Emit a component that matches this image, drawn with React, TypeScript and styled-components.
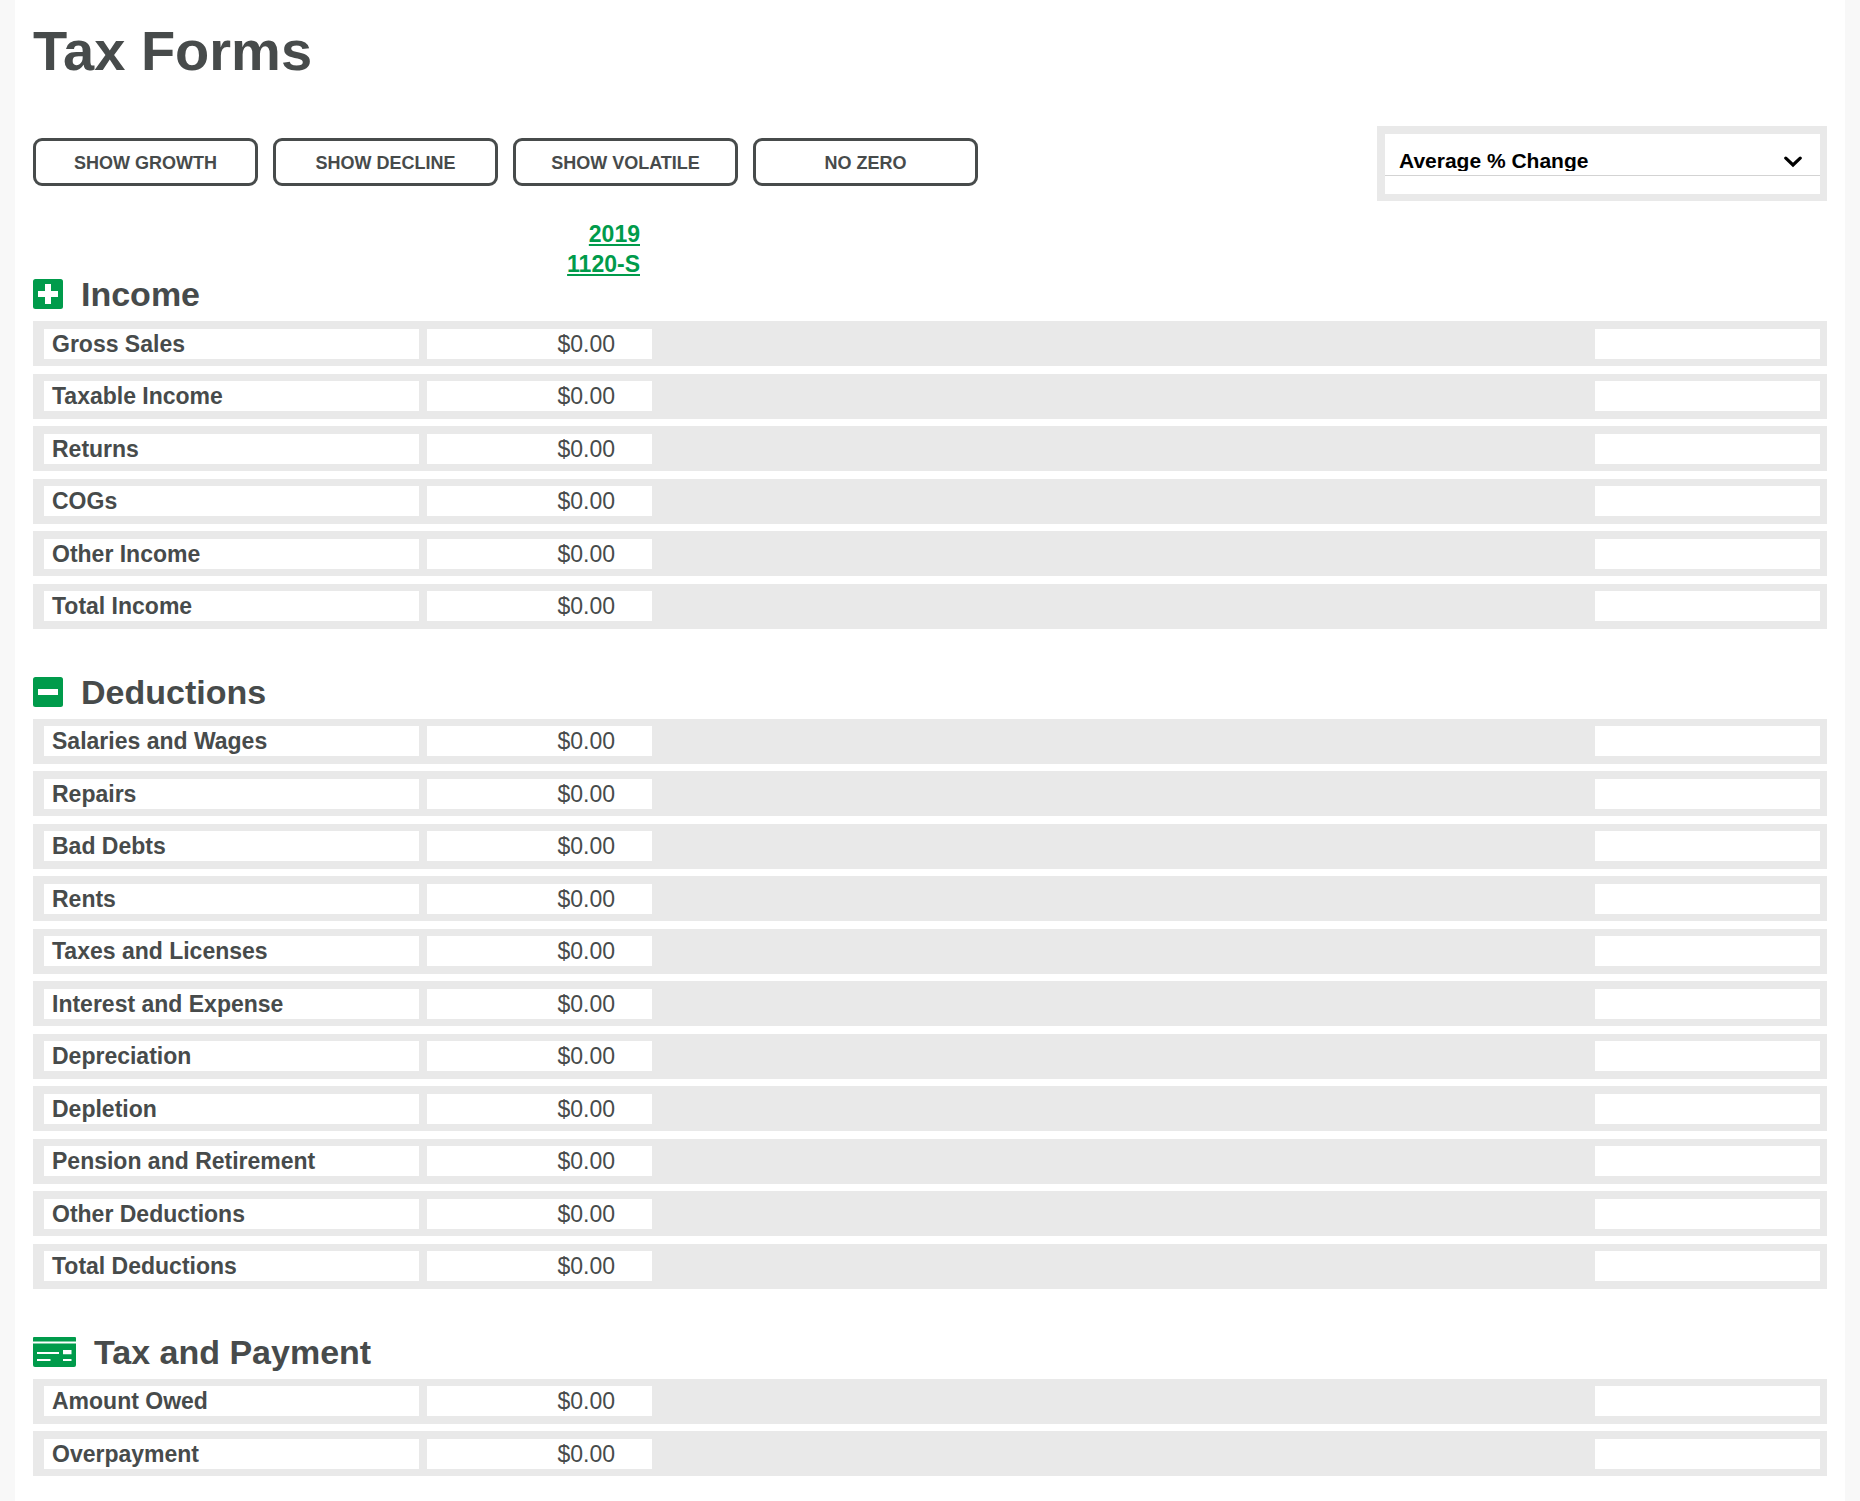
import React, { useState } from "react";
import styled, { createGlobalStyle } from "styled-components";

const ink = "#474b4b";
const green = "#009b4b";
const gray = "#e9e9e9";

const GlobalStyle = createGlobalStyle`
  *, *::before, *::after { box-sizing: border-box; }
  body {
    margin: 0;
    background: #f8f8f8;
    color: ${ink};
    font-family: "Liberation Sans", Arial, Helvetica, sans-serif;
    font-size: 23px;
    line-height: 30px;
  }
`;

const Page = styled.main`
  min-height: 100vh;
  margin: 0 15px;
  padding: 18px 18px 25px;
  background: #fff;
`;

const Title = styled.h1`
  margin: 0 0 42px;
  font-size: 56px;
  line-height: 66px;
`;

const Toolbar = styled.div`
  display: flex;
  justify-content: space-between;
  align-items: flex-start;
`;

const Filters = styled.div`
  display: flex;
  gap: 15px;
  padding-top: 12px;
`;

const FilterButton = styled.button`
  width: 225px;
  height: 48px;
  padding: 2px 0 0;
  border: 3px solid ${ink};
  border-radius: 9px;
  background: #fff;
  color: ${ink};
  font: bold 18px "Liberation Sans", Arial, sans-serif;
  cursor: pointer;
`;

const MetricFrame = styled.div`
  width: 450px;
  height: 75px;
  border: 8px solid ${gray};
  border-right-width: 7px;
  border-bottom-width: 7px;
`;

const MetricSelect = styled.div`
  display: grid;
  align-items: center;
  border-bottom: 1px solid #d3d3d3;

  > * {
    grid-area: 1 / 1;
  }

  svg {
    justify-self: end;
    margin-right: 18px;
    margin-top: 14px;
    pointer-events: none;
  }
`;

const Select = styled.select`
  width: 100%;
  height: 41px;
  padding: 15px 14px 4px;
  border: 0;
  border-radius: 0;
  appearance: none;
  background: transparent;
  color: #000;
  font: bold 21px "Liberation Sans", Arial, sans-serif;
`;

const Table = styled.table`
  display: block;
`;

const Head = styled.thead`
  display: block;
  padding-top: 18px;
`;

const HeadRow = styled.tr`
  display: flex;
  padding-left: 11px;
  gap: 8px;
`;

const HeadSpacer = styled.td`
  width: 375px;
  padding: 0;
`;

const HeadCell = styled.th`
  width: 225px;
  padding: 0 12px 0 0;
  text-align: right;
`;

const FormLink = styled.a`
  display: block;
  color: ${green};
`;

const Section = styled.tbody`
  display: block;

  & + & {
    margin-top: 48px;
  }
`;

const SectionRow = styled.tr`
  display: block;
  padding-bottom: 12px;
`;

const SectionHead = styled.th`
  display: flex;
  align-items: center;
  gap: 18px;
  padding: 0;
  font-size: 34px;
  line-height: 30px;
`;

const DataRow = styled.tr<{ $tight: boolean }>`
  display: flex;
  gap: 8px;
  margin-bottom: ${(p) => (p.$tight ? "7px" : "8px")};
  padding: ${(p) => (p.$tight ? "7px 7px 8px 11px" : "8px 7px 7px 11px")};
  background: ${gray};

  &:last-child {
    margin-bottom: 0;
  }
`;

const LabelCell = styled.th`
  width: 375px;
  padding: 0 8px;
  background: #fff;
  text-align: left;
`;

const AmountCell = styled.td`
  width: 225px;
  padding: 0 37px 0 0;
  background: #fff;
  text-align: right;
`;

const ChangeCell = styled.td`
  width: 225px;
  height: 30px;
  margin-left: auto;
  padding: 0;
  background: #fff;
`;

const PlusIcon = () => (
  <svg width="30" height="30" viewBox="0 0 30 30" aria-hidden="true">
    <rect width="30" height="30" rx="2.5" fill={green} />
    <path d="M12 5h6v7h7v6h-7v7h-6v-7H5v-6h7z" fill="#fff" />
  </svg>
);

const MinusIcon = () => (
  <svg width="30" height="30" viewBox="0 0 30 30" aria-hidden="true">
    <rect width="30" height="30" rx="2.5" fill={green} />
    <path d="M5 12h20v6H5z" fill="#fff" />
  </svg>
);

const CheckIcon = () => (
  <svg width="43" height="30" viewBox="0 0 43 30" aria-hidden="true">
    <path d="M1 0h41a1 1 0 0 1 1 1v3.500H0V1a1 1 0 0 1 1-1z" fill={green} />
    <path d="M0 6.500h43V28a2 2 0 0 1-2 2H2a2 2 0 0 1-2-2z" fill={green} />
    <path d="M4 15h22v2H4zM4 22h13.500v2H4zM30 13h8.500v4.200H30zM30 22h8.500v2H30z" fill="#fff" />
  </svg>
);

const Chevron = () => (
  <svg width="18" height="12" viewBox="0 0 18 12" aria-hidden="true">
    <path d="M1.800 2.200 9 9 16.200 2.200" fill="none" stroke="#000" strokeWidth="3.200" strokeLinecap="round" />
  </svg>
);

const filters = ["SHOW GROWTH", "SHOW DECLINE", "SHOW VOLATILE", "NO ZERO"];

// Rows alternate between two roundings of the same padding; `phase` picks the first one.
const sections = [
  {
    title: "Income",
    Icon: PlusIcon,
    phase: 0,
    rows: ["Gross Sales", "Taxable Income", "Returns", "COGs", "Other Income", "Total Income"],
  },
  {
    title: "Deductions",
    Icon: MinusIcon,
    phase: 1,
    rows: [
      "Salaries and Wages",
      "Repairs",
      "Bad Debts",
      "Rents",
      "Taxes and Licenses",
      "Interest and Expense",
      "Depreciation",
      "Depletion",
      "Pension and Retirement",
      "Other Deductions",
      "Total Deductions",
    ],
  },
  { title: "Tax and Payment", Icon: CheckIcon, phase: 1, rows: ["Amount Owed", "Overpayment"] },
];

export default function App() {
  const [metric, setMetric] = useState("average");
  return (
    <>
      <GlobalStyle />
      <Page>
        <Title>Tax Forms</Title>
        <Toolbar>
          <Filters>
            {filters.map((name) => (
              <FilterButton key={name} type="button">
                {name}
              </FilterButton>
            ))}
          </Filters>
          <MetricFrame>
            <MetricSelect>
              <Select aria-label="Metric" value={metric} onChange={(e) => setMetric(e.target.value)}>
                <option value="average">Average % Change</option>
              </Select>
              <Chevron />
            </MetricSelect>
          </MetricFrame>
        </Toolbar>
        <Table>
          <Head>
            <HeadRow>
              <HeadSpacer />
              <HeadCell scope="col">
                <FormLink href="#form">
                  2019
                  <br />
                  1120-S
                </FormLink>
              </HeadCell>
            </HeadRow>
          </Head>
          {sections.map(({ title, Icon, phase, rows }) => (
            <Section key={title}>
              <SectionRow>
                <SectionHead scope="rowgroup">
                  <Icon />
                  {title}
                </SectionHead>
              </SectionRow>
              {rows.map((label, i) => (
                <DataRow key={label} $tight={(i + phase) % 2 === 1}>
                  <LabelCell scope="row">{label}</LabelCell>
                  <AmountCell>$0.00</AmountCell>
                  <ChangeCell />
                </DataRow>
              ))}
            </Section>
          ))}
        </Table>
      </Page>
    </>
  );
}
